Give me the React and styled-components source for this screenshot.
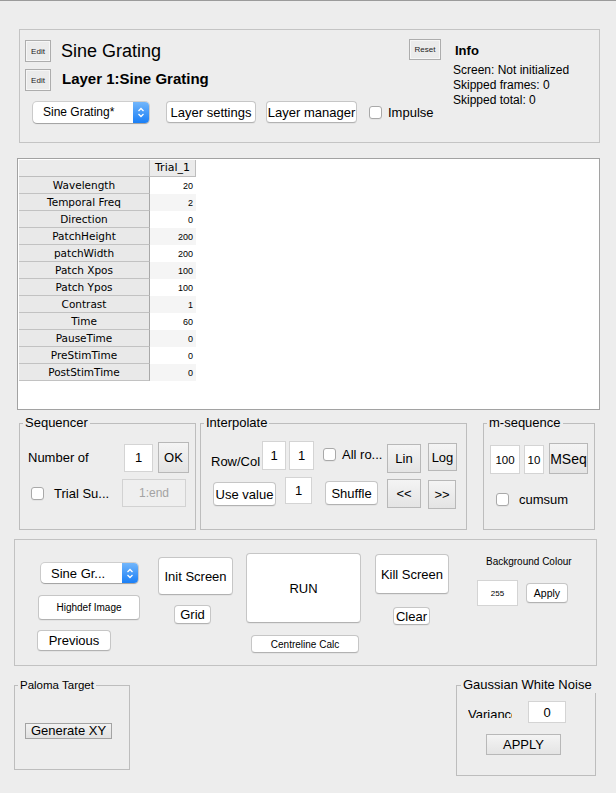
import React from 'react'
import styled, {createGlobalStyle, css} from 'styled-components'

const GlobalStyle = createGlobalStyle`
  html, body {
    margin: 0;
    padding: 0;
    background: #ededed;
  }
  body {
    font-family: "Liberation Sans", Arial, sans-serif;
    color: #000;
  }
  * {
    box-sizing: border-box;
  }
`;

// margins that differ from one control to the next
const place = css`
  margin-left: ${p => p.$ml || 0}px;
  margin-top: ${p => p.$mt || 0}px;
  flex-shrink: 0;
`;

const size = css`
  width: ${p => p.$w}px;
  height: ${p => p.$h}px;
  font-size: ${p => p.$fs || 13}px;
`;

const params = [
  ['Wavelength', 20],
  ['Temporal Freq', 2],
  ['Direction', 0],
  ['PatchHeight', 200],
  ['patchWidth', 200],
  ['Patch Xpos', 100],
  ['Patch Ypos', 100],
  ['Contrast', 1],
  ['Time', 60],
  ['PauseTime', 0],
  ['PreStimTime', 0],
  ['PostStimTime', 0]
];

const Chevrons = () => (
  <svg width="8" height="13" viewBox="0 0 8 13">
    <path d="M1.5 5 L4 2.5 L6.5 5" fill="none" stroke="#fff" strokeWidth="1.3"/>
    <path d="M1.5 8 L4 10.5 L6.5 8" fill="none" stroke="#fff" strokeWidth="1.3"/>
  </svg>
);

const Popup = ({label, ...rest}) => (
  <PopupBox {...rest}>
    <PopupLabel>{label}</PopupLabel>
    <Stepper><Chevrons/></Stepper>
  </PopupBox>
);

const App = () => (
  <>
    <GlobalStyle/>
    <Window>
      <TopPanel>
        <LeftCol>
          <HeaderRow>
            <SmallBtn>Edit</SmallBtn>
            <StimTitle>Sine Grating</StimTitle>
            <ResetBtn>Reset</ResetBtn>
          </HeaderRow>
          <LayerRow>
            <SmallBtn>Edit</SmallBtn>
            <LayerTitle>Layer 1:Sine Grating</LayerTitle>
          </LayerRow>
          <ControlsRow>
            <Popup label="Sine Grating*" $w={116} $h={21} $fs={12}/>
            <PushBtn $w={90} $h={22} $ml={17}>Layer settings</PushBtn>
            <PushBtn $w={91} $h={22} $ml={10}>Layer manager</PushBtn>
            <Check $ml={12}/>
            <Label $ml={6}>Impulse</Label>
          </ControlsRow>
        </LeftCol>
        <InfoCol>
          <InfoTitle>Info</InfoTitle>
          <InfoLines>
            <div>Screen: Not initialized</div>
            <div>Skipped frames: 0</div>
            <div>Skipped total: 0</div>
          </InfoLines>
        </InfoCol>
      </TopPanel>

      <TableBox>
        <ParamTable>
          <tbody>
            <tr>
              <CornerCell/>
              <ColHead>Trial_1</ColHead>
            </tr>
            {params.map(([name, value], i) => (
              <tr key={name}>
                <RowHead>{name}</RowHead>
                <DataCell $odd={i % 2 === 1}>{value}</DataCell>
              </tr>
            ))}
          </tbody>
        </ParamTable>
      </TableBox>

      <PanelRow>
        <Panel $w={177} $h={107}>
          <PanelTitle>Sequencer</PanelTitle>
          <PanelBody $pt={18} $pl={8}>
            <Row $align="center">
              <Label $w={96}>Number of</Label>
              <Field $w={29} $h={28}>1</Field>
              <BevelBtn $w={31} $h={31} $ml={5}>OK</BevelBtn>
            </Row>
            <Row $align="center" $mt={6}>
              <Check $ml={3}/>
              <Label $ml={10} $w={68}>Trial Su...</Label>
              <DisabledBtn $w={64} $h={28} $fs={12}>1:end</DisabledBtn>
            </Row>
          </PanelBody>
        </Panel>

        <Panel $w={267} $h={107} $ml={4}>
          <PanelTitle>Interpolate</PanelTitle>
          <PanelBody $pt={17} $pl={10}>
            <Row>
              <Label $w={51} $mt={13}>Row/Col</Label>
              <Field $w={24} $h={29}>1</Field>
              <Field $w={25} $h={29} $ml={3}>1</Field>
              <CheckGroup $ml={9} $mt={6}>
                <Check/>
                <Label $ml={6}>All ro...</Label>
              </CheckGroup>
              <BevelBtn $w={34} $h={29} $mt={3}>Lin</BevelBtn>
              <BevelBtn $w={29} $h={28} $ml={7} $mt={2}>Log</BevelBtn>
            </Row>
            <Row $mt={4}>
              <PushBtn $w={63} $h={24} $ml={2} $mt={5}>Use value</PushBtn>
              <Field $w={27} $h={27} $ml={9}>1</Field>
              <PushBtn $w={53} $h={24} $ml={13} $mt={4}>Shuffle</PushBtn>
              <BevelBtn $w={34} $h={29} $ml={9} $mt={2}>&lt;&lt;</BevelBtn>
              <BevelBtn $w={28} $h={29} $ml={7} $mt={3}>&gt;&gt;</BevelBtn>
            </Row>
          </PanelBody>
        </Panel>

        <Panel $w={112} $h={107} $ml={16}>
          <PanelTitle>m-sequence</PanelTitle>
          <PanelBody $pt={19} $pl={6}>
            <Row>
              <Field $w={30} $h={29} $mt={2} $fs={11.5}>100</Field>
              <Field $w={20} $h={29} $ml={4} $mt={2} $fs={11.5}>10</Field>
              <BevelBtn $w={39} $h={31} $ml={5} $fs={14}>MSeq</BevelBtn>
            </Row>
            <Row $align="center" $mt={18}>
              <Check $ml={6}/>
              <Label $ml={10}>cumsum</Label>
            </Row>
          </PanelBody>
        </Panel>
      </PanelRow>

      <RunPanel>
        <RunCol $w={103} $pt={23}>
          <Popup label="Sine Gr..." $w={97} $h={20} $ml={4}/>
          <PushBtn $w={102} $h={25} $ml={1} $mt={12} $fs={10}>Highdef Image</PushBtn>
          <PushBtn $w={74} $h={21} $mt={10}>Previous</PushBtn>
        </RunCol>
        <RunCol $w={75} $ml={18} $pt={17}>
          <PushBtn $w={75} $h={38}>Init Screen</PushBtn>
          <PushBtn $w={37} $h={19} $ml={16} $mt={10}>Grid</PushBtn>
        </RunCol>
        <RunCol $w={115} $ml={13} $pt={13}>
          <PushBtn $w={115} $h={70}>RUN</PushBtn>
          <PushBtn $w={108} $h={18} $ml={5} $mt={12} $fs={10}>Centreline Calc</PushBtn>
        </RunCol>
        <RunCol $w={74} $ml={14} $pt={14}>
          <PushBtn $w={74} $h={40}>Kill Screen</PushBtn>
          <PushBtn $w={37} $h={18} $ml={18} $mt={13}>Clear</PushBtn>
        </RunCol>
        <RunCol $w={100} $ml={28} $pt={16}>
          <SmallCaption $ml={9}>Background Colour</SmallCaption>
          <Row $align="center" $mt={12}>
            <Field $w={41} $h={26} $fs={8}>255</Field>
            <PushBtn $w={42} $h={20} $ml={8} $fs={10.5}>Apply</PushBtn>
          </Row>
        </RunCol>
      </RunPanel>

      <BottomRow>
        <Panel $w={116} $h={85}>
          <PanelTitle $fs={11.5}>Paloma Target</PanelTitle>
          <PanelBody $pt={37} $pl={10}>
            <GenerateBtn>Generate XY</GenerateBtn>
          </PanelBody>
        </Panel>
        <Panel $w={140} $h={91} $ml={326}>
          <PanelTitle $left={4} $pr={7}>Gaussian White Noise</PanelTitle>
          <PanelBody $pt={15} $pl={11}>
            <Row>
              <ClippedLabel>Variance</ClippedLabel>
              <Field $w={38} $h={22} $ml={16}>0</Field>
            </Row>
            <BevelBtn $w={75} $h={21} $ml={18} $mt={11}>APPLY</BevelBtn>
          </PanelBody>
        </Panel>
      </BottomRow>
    </Window>
  </>
);

export default App

const Window = styled.div`
  width: 616px;
  height: 793px;
  overflow: hidden;
  background: #ededed;
  border-top: 1px solid #9b9b9b;
  display: flex;
  flex-direction: column;
  align-items: flex-start;
`;

const TopPanel = styled.div`
  margin: 28px 0 0 19px;
  width: 581px;
  height: 114px;
  border: 1px solid #c4c4c4;
  display: flex;
  padding: 10px 0 0 5px;
`;
const LeftCol = styled.div`
  width: 416px;
  display: flex;
  flex-direction: column;
`;
const HeaderRow = styled.div`
  display: flex;
  align-items: center;
  height: 22px;
`;
const LayerRow = styled.div`
  display: flex;
  align-items: center;
  margin-top: 7px;
`;
const ControlsRow = styled.div`
  display: flex;
  align-items: center;
  margin-top: 10px;
  padding-left: 8px;
`;
const SmallBtn = styled.div`
  width: 26px;
  height: 22px;
  flex-shrink: 0;
  display: flex;
  align-items: center;
  justify-content: center;
  font-size: 8px;
  color: #222;
  background: #ebebeb;
  border: 1px solid #adadad;
  box-shadow: inset 0 0 0 1px #f6f6f6;
`;
const ResetBtn = styled(SmallBtn)`
  width: 32px;
  height: 21px;
  margin-left: auto;
  align-self: flex-start;
  margin-top: -1px;
`;
const StimTitle = styled.div`
  margin-left: 10px;
  font-size: 18px;
  line-height: 22px;
`;
const LayerTitle = styled.div`
  margin-left: 11px;
  margin-bottom: 4px;
  font-size: 15px;
  font-weight: bold;
`;
const InfoCol = styled.div`
  margin-left: 12px;
  display: flex;
  flex-direction: column;
`;
const InfoTitle = styled.div`
  margin: 3px 0 0 2px;
  font-size: 13px;
  line-height: 16px;
  font-weight: bold;
`;
const InfoLines = styled.div`
  margin-top: 4px;
  font-size: 12px;
  line-height: 15px;
`;

const PopupBox = styled.div`
  ${place}
  ${size}
  display: flex;
  align-items: center;
  background: #fff;
  border-radius: 4px;
  box-shadow: 0 0 0 1px rgba(0, 0, 0, 0.13), 0 1px 1px rgba(0, 0, 0, 0.22);
`;
const PopupLabel = styled.div`
  flex: 1;
  padding-left: 10px;
  white-space: nowrap;
  overflow: hidden;
`;
const Stepper = styled.div`
  width: 16px;
  height: 100%;
  display: flex;
  align-items: center;
  justify-content: center;
  border-radius: 0 4px 4px 0;
  background: linear-gradient(#72b6fb, #1a7ff6);
`;

const PushBtn = styled.button`
  ${place}
  ${size}
  padding: 0;
  font-family: inherit;
  color: #000;
  white-space: nowrap;
  background: #fff;
  border: 1px solid #c6c6c6;
  border-bottom-color: #b2b2b2;
  border-radius: 4px;
  box-shadow: 0 1px 0 rgba(0, 0, 0, 0.04);
  display: flex;
  align-items: center;
  justify-content: center;
`;
const BevelBtn = styled.button`
  ${place}
  ${size}
  padding: 0;
  font-family: inherit;
  color: #000;
  white-space: nowrap;
  background: linear-gradient(#f4f4f4, #e4e4e4);
  border: 1px solid #b8b8b8;
  border-radius: 0;
  display: flex;
  align-items: center;
  justify-content: center;
`;
const DisabledBtn = styled(BevelBtn)`
  background: #efefef;
  border-color: #d2d2d2;
  color: #a3a3a3;
`;
const GenerateBtn = styled.button`
  width: 87px;
  height: 16px;
  padding: 0;
  font-family: inherit;
  font-size: 13px;
  line-height: 14px;
  color: #000;
  background: linear-gradient(#f2f2f2, #e1e1e1);
  border: 1px solid #a3a3a3;
  border-radius: 0;
`;
const Field = styled.div`
  ${place}
  ${size}
  background: #fff;
  border: 1px solid #d4d4d4;
  display: flex;
  align-items: center;
  justify-content: center;
`;
const Check = styled.span`
  ${place}
  width: 13px;
  height: 13px;
  background: #fff;
  border: 1px solid #a9a9a9;
  border-radius: 3px;
  box-shadow: 0 1px 0 rgba(0, 0, 0, 0.04);
`;
const CheckGroup = styled.div`
  ${place}
  width: 64px;
  display: flex;
  align-items: center;
`;
const Label = styled.div`
  ${place}
  ${p => p.$w && `width: ${p.$w}px;`}
  font-size: 13px;
  line-height: 15px;
  white-space: nowrap;
`;
const ClippedLabel = styled.div`
  margin-top: 5px;
  width: 44px;
  height: 12px;
  overflow: hidden;
  font-size: 13px;
  line-height: 17px;
  white-space: nowrap;
`;
const SmallCaption = styled.div`
  ${place}
  font-size: 10px;
  line-height: 12px;
  white-space: nowrap;
`;

const TableBox = styled.div`
  margin: 15px 0 0 17px;
  width: 583px;
  height: 252px;
  border: 1px solid #a2a2a2;
  background: #fff;
  padding: 1px 0 0 1px;
`;
const ParamTable = styled.table`
  border-collapse: separate;
  border-spacing: 0;
  font-family: "DejaVu Sans", Verdana, sans-serif;
  td {
    height: 17px;
    padding: 0;
    box-sizing: border-box;
    line-height: 16px;
    white-space: nowrap;
  }
`;
const CornerCell = styled.td`
  width: 131px;
  background: #ebebeb;
  border-right: 1px solid #bdbdbd;
  border-bottom: 1px solid #bdbdbd;
`;
const ColHead = styled.td`
  width: 46px;
  background: #ebebeb;
  border-right: 1px solid #bdbdbd;
  border-bottom: 1px solid #bdbdbd;
  text-align: center;
  font-size: 11px;
`;
const RowHead = styled.td`
  background: #e9e9e9;
  border-right: 1px solid #a9a9a9;
  border-bottom: 1px solid #c2c2c2;
  text-align: center;
  font-size: 10.5px;
`;
const DataCell = styled.td`
  background: ${p => (p.$odd ? '#f5f5f5' : '#fff')};
  text-align: right;
  padding-right: 3px !important;
  font-family: "Liberation Sans", Arial, sans-serif;
  font-size: 9px;
`;

const PanelRow = styled.div`
  display: flex;
  margin-top: 13px;
  padding-left: 19px;
`;
const Panel = styled.div`
  ${place}
  position: relative;
  width: ${p => p.$w}px;
  height: ${p => p.$h}px;
  border: 1px solid #bdbdbd;
`;
const PanelTitle = styled.div`
  position: absolute;
  top: -9px;
  left: ${p => (p.$left != null ? p.$left : 3)}px;
  padding: 0 ${p => p.$pr || 2}px 0 2px;
  background: #ededed;
  font-size: ${p => p.$fs || 13}px;
  line-height: 16px;
  white-space: nowrap;
`;
const PanelBody = styled.div`
  display: flex;
  flex-direction: column;
  align-items: flex-start;
  padding: ${p => p.$pt}px 0 0 ${p => p.$pl}px;
`;
const Row = styled.div`
  ${place}
  display: flex;
  align-items: ${p => p.$align || 'flex-start'};
`;

const RunPanel = styled.div`
  margin: 9px 0 0 14px;
  width: 583px;
  height: 127px;
  border: 1px solid #c2c2c2;
  display: flex;
  align-items: flex-start;
  padding-left: 22px;
`;
const RunCol = styled.div`
  margin-left: ${p => p.$ml || 0}px;
  width: ${p => p.$w}px;
  padding-top: ${p => p.$pt}px;
  flex-shrink: 0;
  display: flex;
  flex-direction: column;
  align-items: flex-start;
`;

const BottomRow = styled.div`
  display: flex;
  align-items: flex-start;
  margin-top: 19px;
  padding-left: 14px;
`;
